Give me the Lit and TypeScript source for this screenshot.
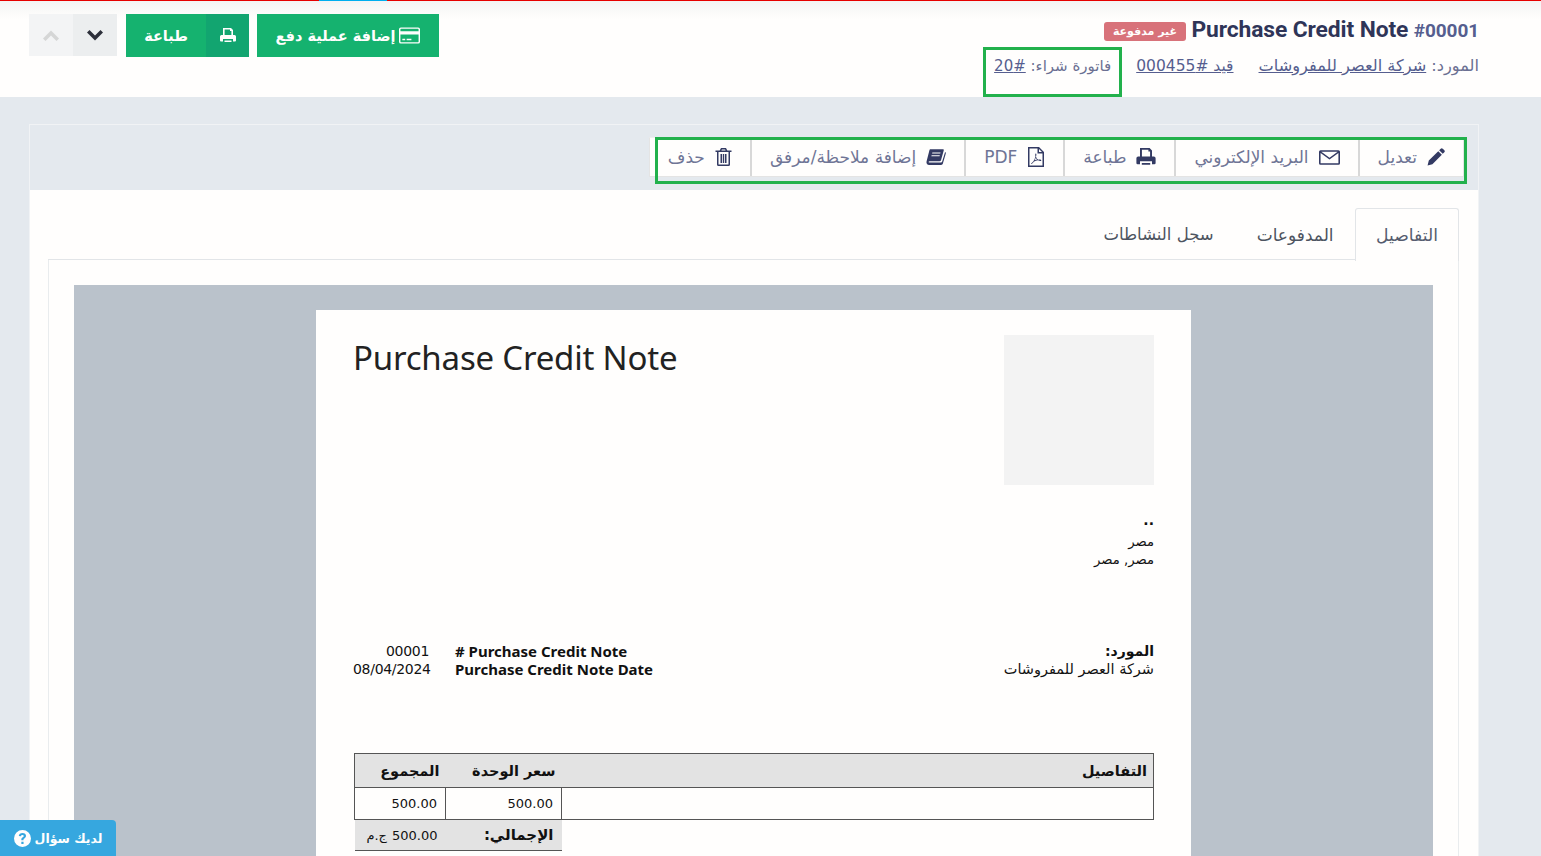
import { LitElement, html, css } from "lit";
import { customElement } from "lit/decorators.js";

const ic = (vb: string, d: string, cls = "ic") => html`<svg class=${cls} viewBox=${vb} aria-hidden="true"><path d=${d} fill="currentColor" fill-rule="evenodd"></path></svg>`;

const PRINT = "M3 0h8l2 2v5h-1.600V3H10V1.500H4.600V7H3zM1.500 7h13A1.500 1.500 0 0 1 16 8.500v4a1 1 0 0 1-1 1h-2V11H3v2.500H1a1 1 0 0 1-1-1v-4A1.500 1.500 0 0 1 1.500 7zM4.500 12.500h7V14h-7z";
const PENCIL = "M12.200.6a1.300 1.300 0 0 1 1.800 0l1.400 1.400a1.300 1.300 0 0 1 0 1.800L14 5.200 10.800 2zM10 2.800 13.200 6l-8.400 8.400-4.300 1.100 1.100-4.300z";
const MAIL = "M1.500 1h17A1.500 1.500 0 0 1 20 2.500v11a1.500 1.500 0 0 1-1.500 1.500h-17A1.500 1.500 0 0 1 0 13.500v-11A1.500 1.500 0 0 1 1.500 1zM1.500 3.800V13.500h17V3.800L10 10zM2.200 2.500 10 8.200l7.800-5.700z";
const PDF = "M1 0h11l5 5v15H1zM2.500 1.500v17h13V6.500h-5v-5zM12 2v3h3zM4 16.500c1.800-1 3.500-3.500 4.500-7-.4-1.500-.4-3 .3-3 .8 0 .7 1.700.2 3.200.6 1.500 1.500 2.500 2.300 3 1.500-.2 3-.1 3 .7 0 .8-1.800.7-3.300-.2-1.500.3-3 .8-4.300 1.500C5.500 16.500 4.500 17.500 4 16.500zM8.800 10.700c-.4 1-.8 1.800-1.300 2.600l2.600-.8c-.5-.5-1-1.100-1.300-1.800z";
const BOOK = "M5 0h13.500c.8 0 1.300.6 1 1.400L16.500 12c-.2.800-.8 1.200-1.600 1.200H4c-1.300 0-1.700 1.400-.3 1.400h12.800c.6 0 1-.3 1.200-.8L21 3c.7.300 1 1 .7 1.800L18.500 16c-.3.800-1 1.300-1.800 1.300H3.500C1.500 17.300 0 15.500.6 13.500L3.700 1.300C3.900.5 4.300 0 5 0zM7 3.500l-.3 1h9l.3-1zM6.200 6.500l-.3 1h9l.3-1z";
const TRASH = "M6 0h5l1.300 2.500H16.500V4H15v12.500a1.500 1.500 0 0 1-1.500 1.500h-10A1.500 1.500 0 0 1 2 16.500V4H.5V2.500h4.200zM6.400 2.500h4.200l-.5-1H6.900zM3.500 4v12.500h10V4zM5.500 6H7v9H5.500zM7.800 6h1.400v9H7.800zM10 6h1.500v9H10z";
const CARD = "M2 0h18a2 2 0 0 1 2 2v13a2 2 0 0 1-2 2H2a2 2 0 0 1-2-2V2a2 2 0 0 1 2-2zM2 1.500a.5.500 0 0 0-.5.500v2h19V2a.5.500 0 0 0-.5-.5zM1.500 7.500V15a.5.500 0 0 0 .5.500h18a.5.500 0 0 0 .5-.5V7.500zM3.500 12h3v1.500h-3zM8 12h5v1.500H8z";
const Q = "M8 0a8 8 0 1 1 0 16A8 8 0 0 1 8 0zM8 2.800c-2 0-3.300 1-3.500 2.800l2 .3c.2-.9.700-1.300 1.400-1.300.8 0 1.300.4 1.300 1 0 .5-.3.800-1 1.300-.9.600-1.300 1.200-1.300 2.200v.6h2v-.4c0-.5.200-.8.900-1.300 1-.7 1.500-1.400 1.500-2.500 0-1.600-1.200-2.700-3.300-2.700zM6.900 11h2.100v2.100H6.900z";
const CHEV = "M8 .5 16 8.500 13.500 11 8 5.500 2.500 11 0 8.500z";

@customElement("app-root")
export class AppRoot extends LitElement {
  static styles = css`
    :host { display: block; height: 856px; overflow: hidden; position: relative; background: #e4e9ee; direction: rtl;
      font-family: "DejaVu Sans", "Noto Sans", sans-serif; color: #3a3f5c; }
    svg { display: block; flex: none; }
    a { color: #565e8f; text-decoration: underline; }

    .top { height: 97px; box-sizing: border-box; background: linear-gradient(#f4f4f4 0, #fffefd 18px); border-top: 1px solid #e60000;
      display: flex; justify-content: space-between; padding: 13px 62px 0 29px; position: relative; }
    .blue { position: absolute; left: 319px; top: -1px; width: 68px; height: 1px; background: #00aeef; }
    .info { display: flex; flex-direction: column; align-items: flex-start; }
    .title-row { display: flex; align-items: center; gap: 6px; height: 32px; }
    .title { font: 700 22.8px/32px Roboto, sans-serif; color: #2f3558; direction: ltr; white-space: nowrap; letter-spacing: -0.1px; }
    .title span { color: #565e8f; font-size: 19px; }
    .badge { background: #d8727a; color: #fffefd; border-radius: 3px; font-size: 11px; font-weight: 700; line-height: 19px; height: 19px; padding: 0 8.5px; margin-top: 2px; white-space: nowrap; }
    .meta { display: flex; gap: 25px; font-size: 15.5px; line-height: 22px; color: #6b7092; margin-top: 9px; white-space: nowrap; }
    .meta .wide { font-size: 16.2px; }
    .meta .narrow { font-size: 15px; }
    .actions { display: flex; direction: ltr; height: 43px; gap: 8px; }
    .btn { background: #15b26f; color: #fffefd; display: flex; align-items: center; font-size: 14.5px; font-weight: 700; height: 43px; }
    .pay { width: 182px; justify-content: center; gap: 4px; }
    .pay .ic { width: 21px; height: 17px; }
    .print { width: 123px; }
    .print b { flex: 1; text-align: center; font-weight: 700; }
    .print i { width: 43px; height: 43px; background: #12a570; display: flex; align-items: center; justify-content: center; }
    .print .ic { width: 16px; height: 15px; }
    .nav { display: flex; height: 42px; width: 88px; margin-right: 1px; }
    .nav div { flex: 1; display: flex; align-items: center; justify-content: center; }
    .up { background: #f3f4f5; color: #d5d6d6; }
    .down { background: #eceeef; color: #2c2f3a; }
    .down svg { transform: scaleY(-1); }
    .nav svg { width: 16px; height: 11px; }

    .card { margin-top: 27px; margin-inline: 62px 29px; background: #fffefd; border: 1px solid #f1f3f5; border-bottom: 0; height: 800px; }
    .bar { background: #e4e9ee; height: 65px; padding: 12px 14px 0 0; box-sizing: border-box; display: flex; }
    .tools { display: flex; height: 40px; background: #fffefd; border: 1px solid #e4e4e4; border-top: 1px solid #f0f0f0; box-sizing: border-box; }
    .tool { display: flex; align-items: center; gap: 10px; padding: 0 18px; height: 38px; color: #6f7596; font-size: 17px; border-inline-end: 2px solid #d8d8d8; white-space: nowrap; }
    .tool:last-child { border-inline-end: 0; }
    .tool .ic { color: #333a63; }

    .body { padding: 18px 19px 0 18px; }
    .tabs { display: flex; border-bottom: 1px solid #e2e5e8; height: 51px; }
    .tab { padding: 0 21.5px; font-size: 17px; line-height: 54px; color: #4d5460; white-space: nowrap; }
    .tab.last { font-size: 16.5px; }
    .tab.on { background: #fffefd; border: 1px solid #e2e5e8; border-bottom: 0; border-radius: 3px 3px 0 0; height: 52px; padding: 0 20px; margin-bottom: -1px; color: #555c6e; font-size: 17.2px; line-height: 53px; }
    .panel { border: 1px solid #e9ecee; border-top: 0; padding: 25px 25px 0 25px; height: 700px; }
    .grey { background: #bac2cb; padding: 25px 242px 0 242px; height: 700px; }
    .paper { background: #fffefd; height: 700px; padding: 25px 37px 0 38px; box-sizing: border-box; color: #111; position: relative; }
    .ptop { display: flex; justify-content: space-between; }
    .logo { width: 150px; height: 150px; background: #f3f3f3; }
    .ptitle { font: 400 33px/46px "Noto Sans", "Open Sans", sans-serif; color: #222; direction: ltr; letter-spacing: -0.2px; margin-left: -1px; }
    .addr { margin-top: 23px; font-size: 13.2px; line-height: 18px; }
    .addr b { display: block; font-size: 14px; line-height: 25px; }
    .parties { margin-top: 73px; display: flex; justify-content: space-between; align-items: flex-start; font-size: 14.5px; line-height: 18px; }
    .parties b { display: block; font-size: 14px; }
    .nums { display: grid; direction: ltr; grid-template-columns: 76px auto; column-gap: 26px; margin-left: -1px; }
    .nums .v { text-align: right; font-size: 14px; letter-spacing: -0.3px; white-space: nowrap; }
    .nums .k { font: 700 15px/18px "Noto Sans", "DejaVu Sans", sans-serif; color: #111; }

    table { margin-top: 75px; width: 100%; border-collapse: collapse; color: #111; table-layout: fixed; }
    th { background: #e3e3e3; font-weight: 700; height: 33px; padding: 0 6px; border-top: 1px solid #555; border-bottom: 1px solid #555; text-align: right; font-size: 14.500px; }
    th:first-child { border-right: 1px solid #555; }
    th:last-child { border-left: 1px solid #555; }
    td { height: 31px; border: 1px solid #555; text-align: right; direction: ltr; padding: 0 8px 0 7px; font-size: 13px; }
    .tot td { border: 0; background: #e3e3e3; border-bottom: 1px solid #555; height: 30px; }
    .tot td.blank { background: none; border: 0; }
    .tot td.lbl { direction: rtl; font-size: 15px; }
    .tot small { font-size: 13px; margin-right: 5px; }

    .mark { position: absolute; border: 3px solid #22b14c; box-sizing: border-box; pointer-events: none; }
    .m1 { left: 983px; top: 47px; width: 139px; height: 50px; }
    .m2 { left: 655px; top: 137px; width: 812px; height: 47px; }
    .help { position: absolute; left: 0; bottom: 0; width: 116px; height: 36px; background: #36a7df; color: #fffefd; border-radius: 0 4px 0 0; display: flex; align-items: center; justify-content: center; gap: 4px; font-size: 12.5px; font-weight: 700; direction: ltr; }
    .help .ic { width: 17px; height: 17px; }
  `;

  tool(label: string, d: string, vb: string, w: number, h: number) {
    return html`<div class="tool"><svg class="ic" viewBox=${vb} style="width:${w}px;height:${h}px"><path d=${d} fill="currentColor" fill-rule="evenodd"></path></svg><span>${label}</span></div>`;
  }

  render() {
    return html`
      <header class="top">
        <div class="blue"></div>
        <div class="info">
          <div class="title-row">
            <div class="title">Purchase Credit Note <span>#00001</span></div>
            <div class="badge">غير مدفوعة</div>
          </div>
          <div class="meta">
            <div class="wide">المورد: <a>شركة العصر للمفروشات</a></div>
            <div><a>قيد #000455</a></div>
            <div class="narrow">فاتورة شراء: <a>#20</a></div>
          </div>
        </div>
        <div class="actions">
          <div class="nav"><div class="up">${ic("0 0 16 11", CHEV)}</div><div class="down">${ic("0 0 16 11", CHEV)}</div></div>
          <div class="btn print"><b>طباعة</b><i>${ic("0 0 16 15", PRINT)}</i></div>
          <div class="btn pay"><span>إضافة عملية دفع</span>${ic("0 0 22 17", CARD)}</div>
        </div>
      </header>
      <section class="card">
        <div class="bar">
          <div class="tools">
            ${this.tool("تعديل", PENCIL, "0 0 16 16", 18, 18)}
            ${this.tool("البريد الإلكتروني", MAIL, "0 0 20 16", 21, 17)}
            ${this.tool("طباعة", PRINT, "0 0 16 15", 20, 18)}
            ${this.tool("PDF", PDF, "0 0 18 20", 18, 20)}
            ${this.tool("إضافة ملاحظة/مرفق", BOOK, "0 0 22 18", 20, 17)}
            ${this.tool("حذف", TRASH, "0 0 17 18", 17, 18)}
          </div>
        </div>
        <div class="body">
          <div class="tabs">
            <div class="tab on">التفاصيل</div>
            <div class="tab">المدفوعات</div>
            <div class="tab last">سجل النشاطات</div>
          </div>
          <div class="panel">
            <div class="grey">
              <div class="paper">
                <div class="ptop">
                  <div>
                    <div class="logo"></div>
                    <div class="addr"><b>..</b>مصر<br />مصر, مصر</div>
                  </div>
                  <div class="ptitle">Purchase Credit Note</div>
                </div>
                <div class="parties">
                  <div><b>المورد:</b>شركة العصر للمفروشات</div>
                  <div class="nums">
                    <div class="v">00001</div><div class="k"># Purchase Credit Note</div>
                    <div class="v">08/04/2024</div><div class="k">Purchase Credit Note Date</div>
                  </div>
                </div>
                <table>
                  <colgroup><col /><col style="width:116px" /><col style="width:91px" /></colgroup>
                  <tr><th>التفاصيل</th><th>سعر الوحدة</th><th>المجموع</th></tr>
                  <tr><td></td><td>500.00</td><td>500.00</td></tr>
                  <tr class="tot"><td class="blank"></td><td class="lbl"><b>الإجمالي:</b></td><td><small>ج.م</small><bdi>500.00</bdi></td></tr>
                </table>
              </div>
            </div>
          </div>
        </div>
      </section>
      <div class="mark m1"></div>
      <div class="mark m2"></div>
      <div class="help">${ic("0 0 16 16", Q)}<span>لديك سؤال</span></div>
    `;
  }
}
